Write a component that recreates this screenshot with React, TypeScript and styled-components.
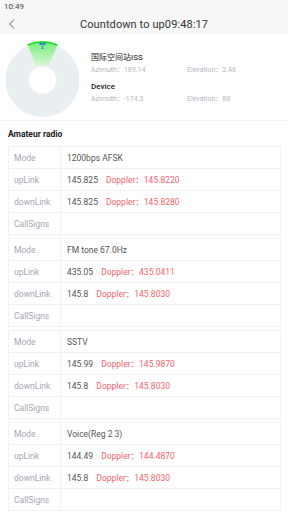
import React from 'react'
import styled, { createGlobalStyle } from 'styled-components'

const GlobalStyle = createGlobalStyle`
  html, body {
    margin: 0;
    padding: 0;
    background: #ffffff;
    font-family: Roboto, "Noto Sans", "Noto Sans CJK SC", sans-serif;
    -webkit-font-smoothing: antialiased;
  }
`

const Page = styled.div`
  width: 288px;
  min-height: 512px;
  background: #ffffff;
`

const Header = styled.div`
  background: #f7f7f7;
`

const StatusBar = styled.div`
  height: 13px;
  padding-left: 4px;
  font-size: 8px;
  line-height: 14px;
  color: #444;
`

const NavBar = styled.div`
  position: relative;
  height: 21px;
  display: flex;
  align-items: center;
  justify-content: center;
  padding-top: 1px;
  box-sizing: border-box;
`

const BackButton = styled.div`
  position: absolute;
  left: 8px;
  top: 6px;
  width: 8px;
  height: 10px;
  display: flex;
`

const Title = styled.div`
  font-size: 11px;
  color: #333;
  letter-spacing: 0.1px;
`

const SatPanel = styled.div`
  height: 86px;
  display: flex;
  border-bottom: 1px solid #f3f3f3;
`

const Radar = styled.svg`
  width: 86px;
  height: 86px;
  margin-top: 4px;
  flex-shrink: 0;
`

const InfoColumn = styled.div`
  padding: 17px 0 0 5px;
  flex: 1;
`

const InfoName = styled.div<{ $gap?: boolean }>`
  font-size: 8px;
  line-height: 13px;
  color: #222;
  font-weight: ${({ $gap }) => ($gap ? 500 : 400)};
  margin-top: ${({ $gap }) => ($gap ? '3px' : '0')};
`

const InfoRow = styled.div`
  display: flex;
  font-size: 7px;
  line-height: 13px;
  color: #b2b5bf;
`

const InfoCell = styled.span`
  width: 96px;
`

const SectionTitle = styled.div`
  height: 25px;
  line-height: 26px;
  padding-left: 8px;
  font-size: 8.5px;
  font-weight: 700;
  color: #222;
`

const TableList = styled.div`
  display: flex;
  flex-direction: column;
  gap: 3px;
  padding: 0 7px 0 8px;
`

const Table = styled.div`
  border: 1px solid #f2f2f2;
  border-bottom: none;
`

const Row = styled.div`
  display: flex;
  height: 21px;
  border-bottom: 1px solid #f2f2f2;
`

const Label = styled.div`
  width: 52px;
  flex-shrink: 0;
  padding-left: 5px;
  box-sizing: border-box;
  border-right: 1px solid #f2f2f2;
  font-size: 8.5px;
  line-height: 22px;
  color: #a4a7b3;
`

const Value = styled.div`
  padding-left: 6px;
  font-size: 8.5px;
  line-height: 22px;
  color: #555;
  white-space: nowrap;
`

const Doppler = styled.span`
  margin-left: 8px;
  color: #f5636d;
`

type Channel = {
  mode: string
  up: string
  upDoppler: string
  down: string
  downDoppler: string
}

const CHANNELS: Channel[] = [
  { mode: '1200bps AFSK', up: '145.825', upDoppler: '145.8220', down: '145.825', downDoppler: '145.8280' },
  { mode: 'FM tone 67.0Hz', up: '435.05', upDoppler: '435.0411', down: '145.8', downDoppler: '145.8030' },
  { mode: 'SSTV', up: '145.99', upDoppler: '145.9870', down: '145.8', downDoppler: '145.8030' },
  { mode: 'Voice(Reg 2 3)', up: '144.49', upDoppler: '144.4870', down: '145.8', downDoppler: '145.8030' }
]

function RadarChart() {
  return (
    <Radar viewBox="0 0 86 86">
      <defs>
        <linearGradient id="beam" x1="0" y1="0" x2="0" y2="1">
          <stop offset="0" stopColor="#6cef6c" />
          <stop offset="1" stopColor="#d4f9d4" />
        </linearGradient>
      </defs>
      <circle cx="42.5" cy="42" r="25.5" fill="none" stroke="#e9eef1" strokeWidth="23" />
      <circle cx="42.5" cy="42" r="14" fill="#fff" stroke="#eeeeee" strokeWidth="0.8" />
      <path
        d="M27.65 7.02 A38 38 0 0 1 57.35 7.02 L48.36 28.19 A15 15 0 0 0 36.64 28.19 Z"
        fill="url(#beam)"
        opacity="0.9"
      />
      <path d="M27.65 7.02 A38 38 0 0 1 57.35 7.02" fill="none" stroke="#1fe01f" strokeWidth="1.6" />
      <g fill="#2f7fe0">
        <rect x="39.5" y="4.6" width="2.6" height="2.4" />
        <rect x="43" y="4.6" width="2.6" height="2.4" />
        <rect x="42" y="5.4" width="1.1" height="0.8" />
        <rect x="42.1" y="7" width="0.9" height="2.2" />
        <circle cx="42.5" cy="10.2" r="1" />
      </g>
    </Radar>
  )
}

export default function App() {
  return (
    <Page>
      <GlobalStyle />
      <Header>
        <StatusBar>10:49</StatusBar>
        <NavBar>
          <BackButton>
            <svg width="8" height="10" viewBox="0 0 8 10">
              <path d="M6 0.5 L1.6 5 L6 9.5" fill="none" stroke="#555" strokeWidth="0.9" />
            </svg>
          </BackButton>
          <Title>Countdown to up09:48:17</Title>
        </NavBar>
      </Header>

      <SatPanel>
        <RadarChart />
        <InfoColumn>
          <InfoName>国际空间站ISS</InfoName>
          <InfoRow>
            <InfoCell>Azimuth：189.14</InfoCell>
            <InfoCell>Elevation：2.46</InfoCell>
          </InfoRow>
          <InfoName $gap>Device</InfoName>
          <InfoRow>
            <InfoCell>Azimuth：-174.3</InfoCell>
            <InfoCell>Elevation：88</InfoCell>
          </InfoRow>
        </InfoColumn>
      </SatPanel>

      <SectionTitle>Amateur radio</SectionTitle>

      <TableList>
        {CHANNELS.map((c, i) => (
          <Table key={i}>
            <Row>
              <Label>Mode</Label>
              <Value>{c.mode}</Value>
            </Row>
            <Row>
              <Label>upLink</Label>
              <Value>
                {c.up}
                <Doppler>Doppler：{c.upDoppler}</Doppler>
              </Value>
            </Row>
            <Row>
              <Label>downLink</Label>
              <Value>
                {c.down}
                <Doppler>Doppler：{c.downDoppler}</Doppler>
              </Value>
            </Row>
            <Row>
              <Label>CallSigns</Label>
              <Value />
            </Row>
          </Table>
        ))}
      </TableList>
    </Page>
  )
}
